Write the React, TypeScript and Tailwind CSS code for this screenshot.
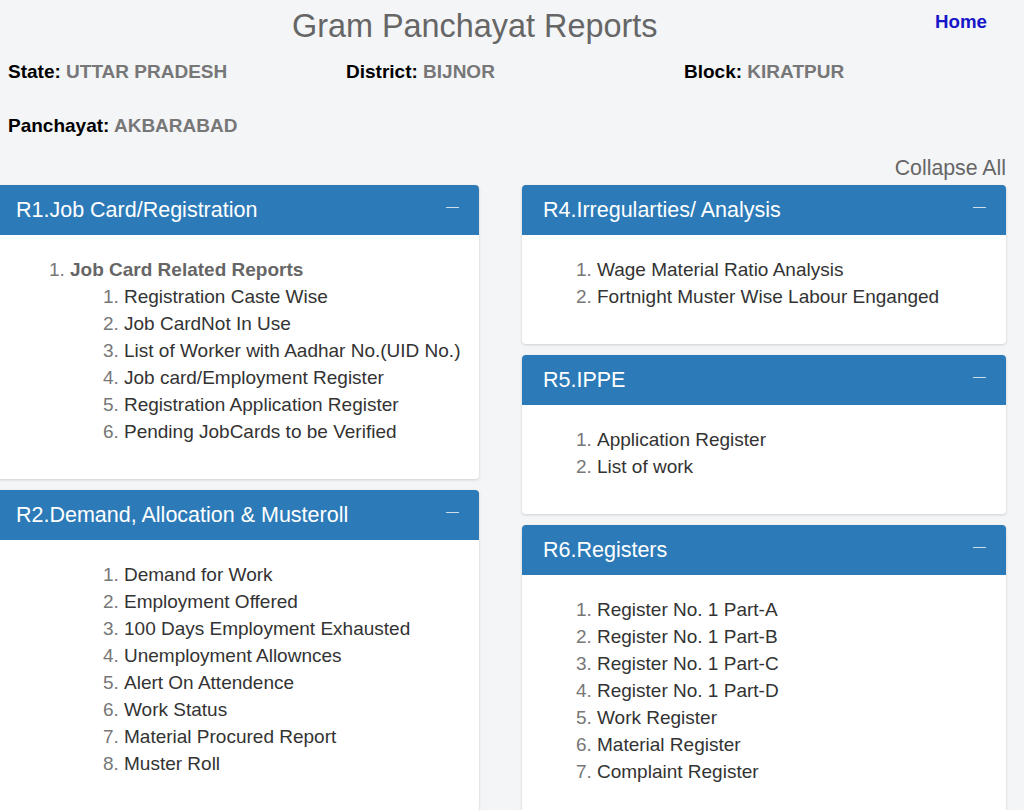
import React from "react";

type Item = { label: string; children?: string[] };
type Panel = { title: string; items: Item[] };

const left: Panel[] = [
  {
    title: "R1.Job Card/Registration",
    items: [
      {
        label: "Job Card Related Reports",
        children: [
          "Registration Caste Wise",
          "Job CardNot In Use",
          "List of Worker with Aadhar No.(UID No.)",
          "Job card/Employment Register",
          "Registration Application Register",
          "Pending JobCards to be Verified",
        ],
      },
    ],
  },
  {
    title: "R2.Demand, Allocation & Musteroll",
    items: [
      {
        label: "",
        children: [
          "Demand for Work",
          "Employment Offered",
          "100 Days Employment Exhausted",
          "Unemployment Allownces",
          "Alert On Attendence",
          "Work Status",
          "Material Procured Report",
          "Muster Roll",
        ],
      },
    ],
  },
];

const right: Panel[] = [
  {
    title: "R4.Irregularties/ Analysis",
    items: [{ label: "Wage Material Ratio Analysis" }, { label: "Fortnight Muster Wise Labour Enganged" }],
  },
  {
    title: "R5.IPPE",
    items: [{ label: "Application Register" }, { label: "List of work" }],
  },
  {
    title: "R6.Registers",
    items: [
      { label: "Register No. 1 Part-A" },
      { label: "Register No. 1 Part-B" },
      { label: "Register No. 1 Part-C" },
      { label: "Register No. 1 Part-D" },
      { label: "Work Register" },
      { label: "Material Register" },
      { label: "Complaint Register" },
    ],
  },
];

function SubList({ items, indent }: { items: string[]; indent: string }) {
  return (
    <ol className={`list-decimal ${indent} marker:text-[#777] marker:font-normal`}>
      {items.map((s) => (
        <li key={s} className="text-[#333]">
          {s}
        </li>
      ))}
    </ol>
  );
}

function PanelBox({ panel }: { panel: Panel }) {
  const nestedOnly = panel.items.length === 1 && panel.items[0].label === "" && panel.items[0].children;
  return (
    <section className="w-[484px] rounded-[4px] bg-white shadow-[0_1px_3px_rgba(0,0,0,0.16)]">
      <div className="flex h-[50px] items-center justify-between rounded-t-[4px] bg-[#2c7bb8] pl-[21px] pr-[20px] text-[21.5px] text-white">
        <span>{panel.title}</span>
        <span className="mb-[5px] h-px w-[13px] bg-white/75" />
      </div>
      <div className="pt-[21px] pb-[34px] text-[19px] leading-[27px]">
        {nestedOnly ? (
          <SubList items={panel.items[0].children!} indent="pl-[129px]" />
        ) : (
          <ol className="list-decimal pl-[75px] marker:text-[#777] marker:font-normal">
            {panel.items.map((it) => (
              <li key={it.label} className={it.children ? "font-bold text-[#666]" : "text-[#333]"}>
                {it.label}
                {it.children && (
                  <div className="font-normal">
                    <SubList items={it.children} indent="pl-[54px]" />
                  </div>
                )}
              </li>
            ))}
          </ol>
        )}
      </div>
    </section>
  );
}

export default function App() {
  return (
    <div
      className="h-[810px] overflow-hidden bg-[#f4f5f7]"
      style={{ fontFamily: '"Liberation Sans", Arial, sans-serif' }}
    >
      <header className="flex items-start">
        <h1 className="ml-[292px] pt-[4px] text-[32.4px] leading-[44px] text-[#666]">Gram Panchayat Reports</h1>
        <a href="#" className="ml-auto mr-[37px] pt-[11px] text-[18.7px] font-bold leading-[22px] text-[#1515c9]">
          Home
        </a>
      </header>

      <div className="mt-[13px] grid grid-cols-[338px_338px_1fr] pl-[8px] text-[19px] font-bold leading-[22px]">
        <div>
          <span className="text-black">State: </span>
          <span className="text-[#777]">UTTAR PRADESH</span>
        </div>
        <div>
          <span className="text-black">District: </span>
          <span className="text-[#777]">BIJNOR</span>
        </div>
        <div>
          <span className="text-black">Block: </span>
          <span className="text-[#777]">KIRATPUR</span>
        </div>
      </div>
      <div className="mt-[32px] pl-[8px] text-[19px] font-bold leading-[22px]">
        <span className="text-black">Panchayat: </span>
        <span className="text-[#777]">AKBARABAD</span>
      </div>

      <div className="mt-[19px] pr-[18px] text-right text-[21.3px] leading-[24px] text-[#666]">Collapse All</div>

      <div className="mt-[5px] ml-[-5px] flex items-start gap-[43px]">
        <div className="flex flex-col gap-[11px]">
          {left.map((p) => (
            <PanelBox key={p.title} panel={p} />
          ))}
        </div>
        <div className="flex flex-col gap-[11px]">
          {right.map((p) => (
            <PanelBox key={p.title} panel={p} />
          ))}
        </div>
      </div>
    </div>
  );
}
